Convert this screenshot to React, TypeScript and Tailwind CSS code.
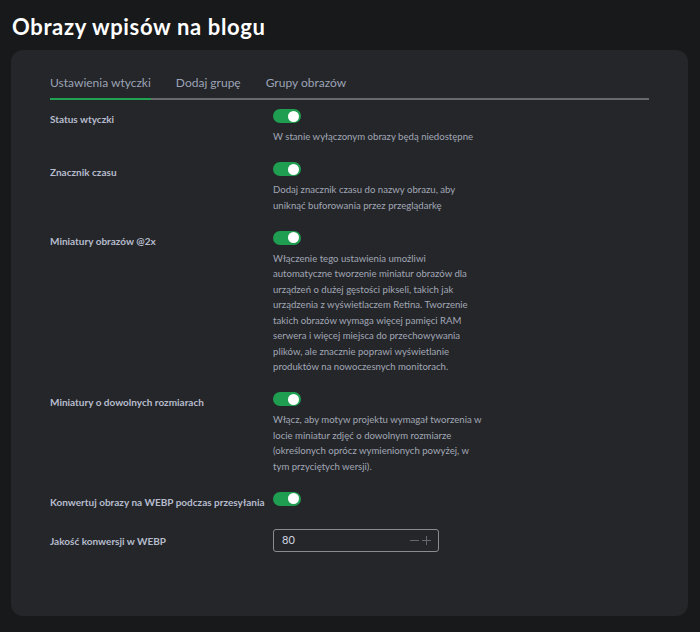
import React from "react";

const rows: { label: string; desc: string[] }[] = [
  { label: "Status wtyczki", desc: ["W stanie wyłączonym obrazy będą niedostępne"] },
  { label: "Znacznik czasu", desc: ["Dodaj znacznik czasu do nazwy obrazu, aby", "uniknąć buforowania przez przeglądarkę"] },
  {
    label: "Miniatury obrazów @2x",
    desc: [
      "Włączenie tego ustawienia umożliwi",
      "automatyczne tworzenie miniatur obrazów dla",
      "urządzeń o dużej gęstości pikseli, takich jak",
      "urządzenia z wyświetlaczem Retina. Tworzenie",
      "takich obrazów wymaga więcej pamięci RAM",
      "serwera i więcej miejsca do przechowywania",
      "plików, ale znacznie poprawi wyświetlanie",
      "produktów na nowoczesnych monitorach.",
    ],
  },
  {
    label: "Miniatury o dowolnych rozmiarach",
    desc: [
      "Włącz, aby motyw projektu wymagał tworzenia w",
      "locie miniatur zdjęć o dowolnym rozmiarze",
      "(określonych oprócz wymienionych powyżej, w",
      "tym przyciętych wersji).",
    ],
  },
];

function Toggle() {
  return (
    <div className="flex h-[14px] w-[28px] shrink-0 items-center justify-end rounded-full bg-[#1f9d50] pr-[2px]">
      <div className="h-[11px] w-[11px] rounded-full bg-white" />
    </div>
  );
}

export default function App() {
  return (
    <div className="min-h-[632px] bg-[#18191b] font-['Lato','Open_Sans',sans-serif]">
      <h1 className="pl-[12px] pt-[12px] text-[22px] font-bold leading-[30px] tracking-[0.65px] text-white">
        Obrazy wpisów na blogu
      </h1>
      <div className="ml-[11px] mt-[8px] h-[566px] w-[677px] rounded-[12px] bg-[#252629] px-[39px] pt-[24px]">
        <div className="flex gap-[25px] border-b-2 border-[#68696c] text-[12px] leading-[18px] text-[#9ba3b7]">
          <div className="-mb-[2px] border-b-2 border-[#1fa352] pb-[6px]">Ustawienia wtyczki</div>
          <div className="pb-[6px]">Dodaj grupę</div>
          <div className="pb-[6px]">Grupy obrazów</div>
        </div>
        <div className="mt-[9px] flex flex-col gap-[17.5px]">
          {rows.map((r) => (
            <div key={r.label} className="flex">
              <div className="w-[223px] whitespace-nowrap pt-[3px] text-[10px] font-bold leading-[14px] text-[#b6bccd]">
                {r.label}
              </div>
              <div>
                <Toggle />
                <div className="mt-[6px] text-[9.6px] leading-[15.5px] text-[#a1a6b6]">
                  {r.desc.map((l) => (
                    <div key={l} className="whitespace-nowrap">
                      {l}
                    </div>
                  ))}
                </div>
              </div>
            </div>
          ))}
          <div className="flex">
            <div className="w-[223px] whitespace-nowrap pt-[3px] text-[10px] font-bold leading-[14px] text-[#b6bccd]">
              Konwertuj obrazy na WEBP podczas przesyłania
            </div>
            <Toggle />
          </div>
          <div className="mt-[3px] flex items-center">
            <div className="w-[223px] whitespace-nowrap text-[10px] font-bold leading-[14px] text-[#b6bccd]">
              Jakość konwersji w WEBP
            </div>
            <div className="flex h-[23px] w-[166px] items-center justify-between rounded-[3px] border border-[#8b8c8f] pl-[8px] pr-[7px]">
              <span className="text-[11px] text-[#d3d7e2]">80</span>
              <span className="flex items-center gap-[3px] text-[#66686e]">
                <svg width="9" height="9" viewBox="0 0 9 9">
                  <path d="M0 4.5H9" stroke="currentColor" strokeWidth="1" />
                </svg>
                <svg width="9" height="9" viewBox="0 0 9 9">
                  <path d="M0 4.5H9M4.5 0V9" stroke="currentColor" strokeWidth="1" />
                </svg>
              </span>
            </div>
          </div>
        </div>
      </div>
    </div>
  );
}
